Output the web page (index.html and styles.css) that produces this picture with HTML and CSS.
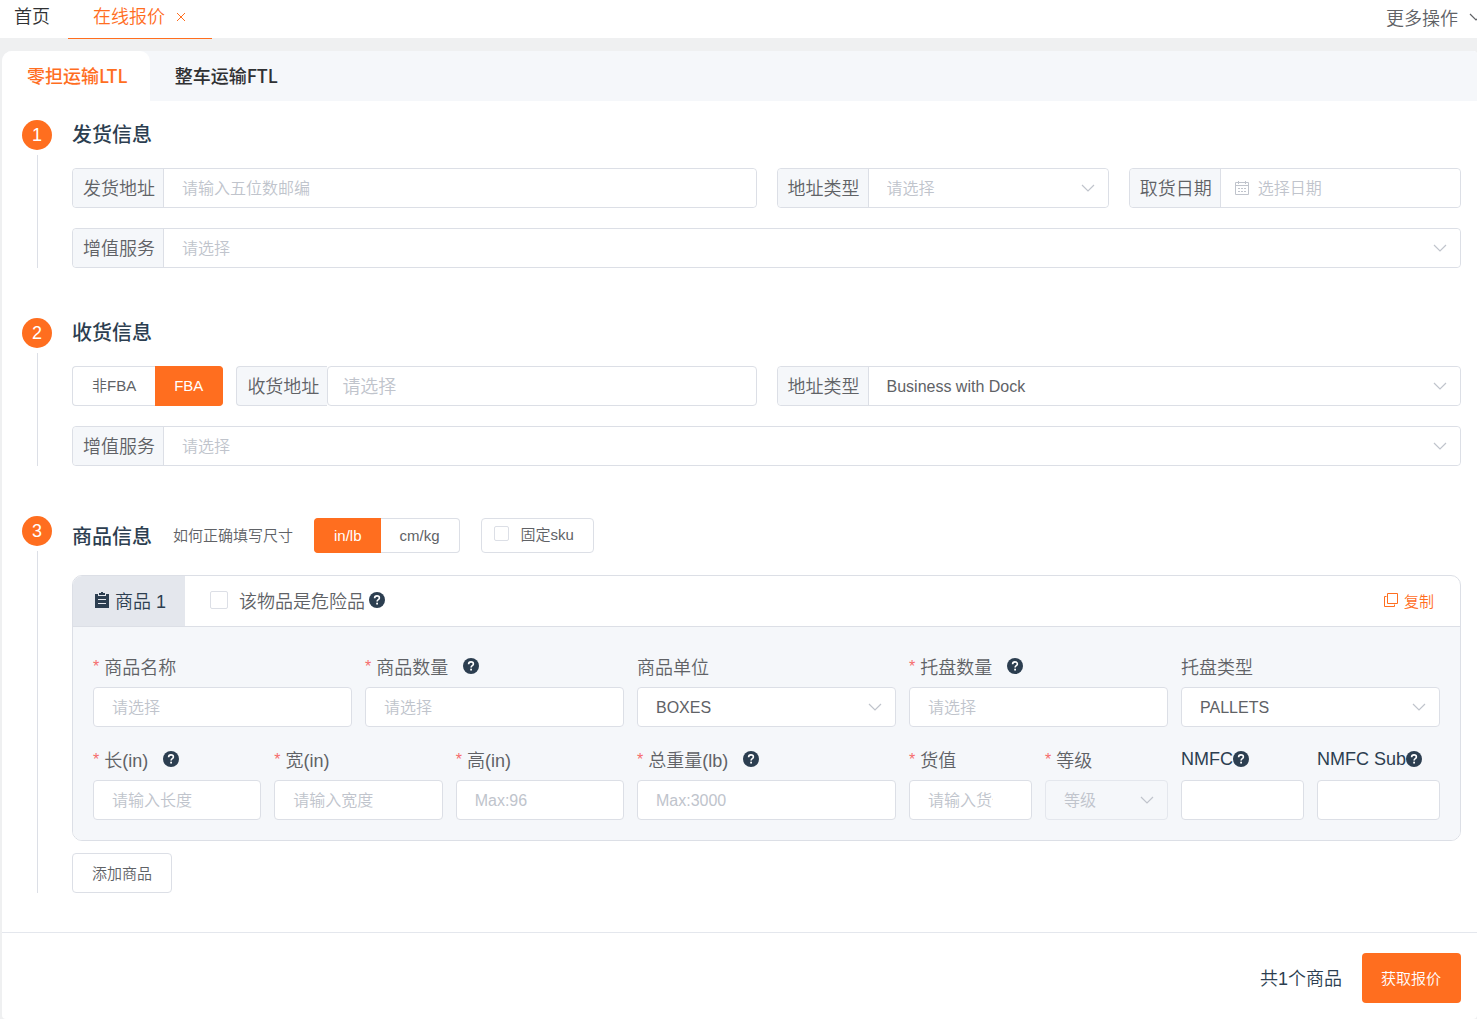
FILE: index.html
```html
<!DOCTYPE html>
<html lang="zh-CN">
<head>
    <meta charset="UTF-8">
    <meta name="viewport" content="width=device-width, initial-scale=1.0">
    <title>在线报价</title>
    <link rel="stylesheet" href="styles.css">
</head>
<body>
    <!-- shared icons -->
    <svg class="sprite" aria-hidden="true">
        <symbol id="icon-arrow" viewBox="0 0 16 16">
            <path d="M2 5l6 6 6-6" fill="none" stroke="currentColor" stroke-width="1.2"/>
        </symbol>
        <symbol id="icon-help" viewBox="0 0 16 16">
            <circle cx="8" cy="8" r="8" fill="#2c3e50"/>
            <path d="M5.6 6.2c0-1.5 1-2.3 2.4-2.3s2.4.8 2.4 2c0 1.7-2.3 1.7-2.3 3.5" fill="none" stroke="#fff" stroke-width="1.6"/>
            <rect x="7.2" y="10.7" width="1.8" height="1.8" fill="#fff"/>
        </symbol>
    </svg>

    <header class="topbar">
        <nav class="topbar-tabs">
            <a href="#" class="top-tab">首页</a>
            <a href="#" class="top-tab active">在线报价
                <svg class="close" viewBox="0 0 10 10"><path d="M1 1l8 8M9 1l-8 8" stroke="currentColor" stroke-width="1"/></svg>
            </a>
        </nav>
        <button type="button" class="more">更多操作 <svg class="icon"><use href="#icon-arrow"/></svg></button>
    </header>

    <main class="page">
        <nav class="mode-tabs">
            <a href="#" class="mode-tab active">零担运输LTL</a>
            <a href="#" class="mode-tab">整车运输FTL</a>
        </nav>

        <form class="quote-form">
            <section class="step">
                <div class="step-side"><span class="step-num">1</span><span class="step-line"></span></div>
                <div class="step-body">
                    <h2>发货信息</h2>
                    <div class="row">
                        <div class="group span-2">
                            <label for="from-zip">发货地址</label>
                            <input type="text" id="from-zip" placeholder="请输入五位数邮编">
                        </div>
                        <div class="group">
                            <label for="from-type">地址类型</label>
                            <div class="select">
                                <select id="from-type" class="empty"><option>请选择</option></select>
                                <svg class="icon"><use href="#icon-arrow"/></svg>
                            </div>
                        </div>
                        <div class="group">
                            <label for="pickup-date">取货日期</label>
                            <div class="date">
                                <svg class="calendar" viewBox="0 0 14 14" fill="none" stroke="currentColor">
                                    <path d="M.5 1.5h13v12H.5zM.5 4.5h13M3.5 0v3M10.5 0v3"/>
                                    <path d="M3 7.5h8M3 10.5h8" stroke-dasharray="2 1"/>
                                </svg>
                                <input type="text" id="pickup-date" placeholder="选择日期">
                            </div>
                        </div>
                        <div class="group span-4">
                            <label for="from-service">增值服务</label>
                            <div class="select">
                                <select id="from-service" class="empty"><option>请选择</option></select>
                                <svg class="icon"><use href="#icon-arrow"/></svg>
                            </div>
                        </div>
                    </div>
                </div>
            </section>

            <section class="step">
                <div class="step-side"><span class="step-num">2</span><span class="step-line"></span></div>
                <div class="step-body">
                    <h2>收货信息</h2>
                    <div class="row">
                        <div class="receiver span-2">
                            <div class="radio-group">
                                <label><input type="radio" name="fba"><span>非FBA</span></label>
                                <label><input type="radio" name="fba" checked><span>FBA</span></label>
                            </div>
                            <div class="group receiver-address">
                                <label for="to-address">收货地址</label>
                                <input type="text" id="to-address" placeholder="请选择">
                            </div>
                        </div>
                        <div class="group span-2">
                            <label for="to-type">地址类型</label>
                            <div class="select">
                                <select id="to-type"><option>Business with Dock</option></select>
                                <svg class="icon"><use href="#icon-arrow"/></svg>
                            </div>
                        </div>
                        <div class="group span-4">
                            <label for="to-service">增值服务</label>
                            <div class="select">
                                <select id="to-service" class="empty"><option>请选择</option></select>
                                <svg class="icon"><use href="#icon-arrow"/></svg>
                            </div>
                        </div>
                    </div>
                </div>
            </section>

            <section class="step">
                <div class="step-side"><span class="step-num">3</span><span class="step-line"></span></div>
                <div class="step-body">
                    <div class="goods-head">
                        <h2>商品信息</h2>
                        <a href="#" class="how-to">如何正确填写尺寸</a>
                        <div class="radio-group small">
                            <label><input type="radio" name="measure" checked><span>in/lb</span></label>
                            <label><input type="radio" name="measure"><span>cm/kg</span></label>
                        </div>
                        <label class="fixed-sku"><input type="checkbox">固定sku</label>
                    </div>

                    <div class="card">
                        <div class="card-head">
                            <div class="card-name">
                                <svg class="clipboard" viewBox="0 0 14 16">
                                    <path d="M0 2h3v2h8V2h3v14H0zM4 1h2V0h2v1h2v2H4z" fill="#2c3e50"/>
                                    <path d="M3 7.5h8M3 11.5h8" stroke="#e4e7ed"/>
                                </svg>
                                商品 1
                            </div>
                            <label class="danger"><input type="checkbox">该物品是危险品</label>
                            <svg class="help"><use href="#icon-help"/></svg>
                            <button type="button" class="copy">
                                <svg viewBox="0 0 14 14" fill="none" stroke="currentColor"><path d="M3.5.5h10v10h-10zM2.5 3.5h-2v10h10v-2"/></svg>
                                复制
                            </button>
                        </div>
                        <div class="card-body">
                            <div class="field">
                                <div class="field-label required"><label for="name">商品名称</label></div>
                                <input type="text" id="name" placeholder="请选择">
                            </div>
                            <div class="field">
                                <div class="field-label required"><label for="count">商品数量</label><svg class="help"><use href="#icon-help"/></svg></div>
                                <input type="text" id="count" placeholder="请选择">
                            </div>
                            <div class="field">
                                <div class="field-label"><label for="unit">商品单位</label></div>
                                <div class="select">
                                    <select id="unit"><option>BOXES</option></select>
                                    <svg class="icon"><use href="#icon-arrow"/></svg>
                                </div>
                            </div>
                            <div class="field">
                                <div class="field-label required"><label for="pallets">托盘数量</label><svg class="help"><use href="#icon-help"/></svg></div>
                                <input type="text" id="pallets" placeholder="请选择">
                            </div>
                            <div class="field">
                                <div class="field-label"><label for="pallet-type">托盘类型</label></div>
                                <div class="select">
                                    <select id="pallet-type"><option>PALLETS</option></select>
                                    <svg class="icon"><use href="#icon-arrow"/></svg>
                                </div>
                            </div>

                            <div class="sizes">
                                <div class="field">
                                    <div class="field-label required"><label for="length">长(in)</label><svg class="help"><use href="#icon-help"/></svg></div>
                                    <input type="text" id="length" placeholder="请输入长度">
                                </div>
                                <div class="field">
                                    <div class="field-label required"><label for="width">宽(in)</label></div>
                                    <input type="text" id="width" placeholder="请输入宽度">
                                </div>
                                <div class="field">
                                    <div class="field-label required"><label for="height">高(in)</label></div>
                                    <input type="text" id="height" placeholder="Max:96">
                                </div>
                            </div>
                            <div class="field">
                                <div class="field-label required"><label for="weight">总重量(lb)</label><svg class="help"><use href="#icon-help"/></svg></div>
                                <input type="text" id="weight" placeholder="Max:3000">
                            </div>
                            <div class="extras">
                                <div class="field">
                                    <div class="field-label required"><label for="value">货值</label></div>
                                    <input type="text" id="value" placeholder="请输入货值">
                                </div>
                                <div class="field">
                                    <div class="field-label required"><label for="class">等级</label></div>
                                    <div class="select">
                                        <select id="class" class="empty" disabled><option>等级</option></select>
                                        <svg class="icon"><use href="#icon-arrow"/></svg>
                                    </div>
                                </div>
                                <div class="field">
                                    <div class="field-label dark"><label for="nmfc">NMFC</label><svg class="help"><use href="#icon-help"/></svg></div>
                                    <input type="text" id="nmfc">
                                </div>
                                <div class="field">
                                    <div class="field-label dark"><label for="nmfc-sub">NMFC Sub</label><svg class="help"><use href="#icon-help"/></svg></div>
                                    <input type="text" id="nmfc-sub">
                                </div>
                            </div>
                        </div>
                    </div>

                    <button type="button" class="add">添加商品</button>
                </div>
            </section>
        </form>

        <footer class="bottom">
            <span>共1个商品</span>
            <button type="button" class="submit">获取报价</button>
        </footer>
    </main>
</body>
</html>
```

FILE: styles.css
```css
* {
    box-sizing: border-box;
}

body {
    margin: 0;
    background-color: #eff0f1;
    color: #2c3e50;
    font-family: "Liberation Sans", "Noto Sans CJK SC", sans-serif;
    font-size: 18px;
    font-weight: 350;
}

a {
    color: inherit;
    text-decoration: none;
}

button,
input,
select {
    margin: 0;
    font-family: inherit;
    font-weight: inherit;
}

button {
    cursor: pointer;
}

h2 {
    margin: 0;
    font-size: 20px;
    font-weight: 500;
    line-height: 28px;
    font-family: "Noto Sans CJK SC", sans-serif;
}

.sprite {
    display: none;
}

.icon,
.help {
    width: 16px;
    height: 16px;
    flex: none;
}

/* top bar */
.topbar {
    display: flex;
    justify-content: space-between;
    height: 38px;
    background-color: #fff;
    overflow-x: clip;
}

.topbar-tabs {
    display: flex;
    gap: 18px;
    padding-left: 14px;
}

.top-tab {
    height: 38px;
    line-height: 34px;
    color: #303133;
}

.top-tab.active {
    display: flex;
    align-items: center;
    gap: 11px;
    height: 39px;
    padding: 0 26px 4px 25px;
    border-bottom: 1px solid #ff6e1f;
    color: #ff6e1f;
}

.close {
    width: 10px;
    height: 10px;
}

.more {
    display: flex;
    align-items: center;
    gap: 10px;
    margin-right: -7px;
    padding: 0 0 4px;
    border: none;
    background: none;
    color: #606266;
    font-size: 18px;
}

/* page */
.page {
    margin: 13px 0 0 2px;
    background-color: #fff;
    border-radius: 10px 4px 4px 4px;
}

.mode-tabs {
    display: flex;
    height: 50px;
    background-color: #f5f7fa;
    border-radius: 10px 4px 0 0;
}

.mode-tab {
    padding: 0 22px 0 25px;
    border-radius: 10px 10px 0 0;
    color: #303133;
    font-family: "Noto Sans CJK SC", sans-serif;
    font-weight: 500;
    line-height: 48px;
}

.mode-tab.active {
    background-color: #fff;
    color: #ff6e1f;
}

.quote-form {
    display: flex;
    flex-direction: column;
    gap: 50px;
    padding: 19px 16px 39px 20px;
}

.step {
    display: flex;
    gap: 20px;
}

.step-side {
    display: flex;
    flex-direction: column;
    align-items: center;
    gap: 5px;
    width: 30px;
}

.step-num {
    width: 30px;
    height: 30px;
    border-radius: 50%;
    background-color: #ff6e1f;
    color: #fff;
    line-height: 30px;
    text-align: center;
}

.step-line {
    flex: 1;
    width: 1px;
    background-color: #dcdfe6;
}

.step-body {
    flex: 1;
    min-width: 0;
}

.row {
    display: grid;
    grid-template-columns: repeat(4, minmax(0, 1fr));
    gap: 20px;
    margin-top: 20px;
}

.span-2 {
    grid-column: span 2;
}

.span-4 {
    grid-column: span 4;
}

/* inputs */
input[type="text"],
select {
    width: 100%;
    height: 40px;
    padding: 0 18px;
    border: 1px solid #dcdfe6;
    border-radius: 4px;
    background-color: #fff;
    color: #606266;
    font-size: 16px;
}

input[type="text"] {
    padding-top: 2px;
}

input::placeholder {
    color: #c0c4cc;
}

select {
    appearance: none;
    opacity: 1;
}

select.empty {
    color: #c0c4cc;
}

select:disabled {
    border-color: #e4e7ed;
    background-color: #f5f7fa;
}

.select {
    position: relative;
    flex: 1;
}

.select .icon {
    position: absolute;
    top: 12px;
    right: 13px;
    color: #c0c4cc;
    pointer-events: none;
}

.group {
    display: flex;
    height: 40px;
    border: 1px solid #dcdfe6;
    border-radius: 4px;
}

.group > label {
    flex: none;
    width: 91px;
    padding-left: 10px;
    border-right: 1px solid #dcdfe6;
    border-radius: 4px 0 0 4px;
    background-color: #f5f7fa;
    color: #606266;
    line-height: 40px;
}

.group input[type="text"],
.group select {
    height: 38px;
    border: none;
}

.group .select .icon {
    top: 11px;
    right: 12px;
}

.date {
    display: flex;
    flex: 1;
    align-items: center;
    gap: 9px;
    padding-left: 14px;
}

.date input[type="text"] {
    padding: 2px 0 0;
}

.calendar {
    width: 14px;
    height: 14px;
    flex: none;
    color: #c0c4cc;
}

.receiver {
    display: flex;
    gap: 13px;
}

.receiver .group {
    flex: 1;
    border: none;
}

.receiver .group > label {
    border: 1px solid #dcdfe6;
    border-right: none;
}

.receiver .group input[type="text"] {
    height: 40px;
    padding: 2px 14px 0;
    border: 1px solid #dcdfe6;
    font-size: 18px;
}

/* radio buttons */
.radio-group {
    display: flex;
}

.radio-group label {
    position: relative;
}

.radio-group input {
    position: absolute;
    opacity: 0;
}

.radio-group span {
    display: block;
    height: 40px;
    padding: 0 19px;
    border: 1px solid #dcdfe6;
    color: #606266;
    font-size: 15px;
    line-height: 38px;
}

.radio-group label:first-child span {
    border-right: none;
    border-radius: 4px 0 0 4px;
}

.radio-group label:last-child span {
    border-left: none;
    border-radius: 0 4px 4px 0;
}

.radio-group input:checked + span {
    border-color: #ff6e1f;
    background-color: #ff6e1f;
    color: #fff;
}

.radio-group.small span {
    height: 35px;
    line-height: 34px;
}

input[type="checkbox"] {
    appearance: none;
    flex: none;
    width: 18px;
    height: 18px;
    border: 1px solid #dcdfe6;
    border-radius: 2px;
    background-color: #fff;
}

/* goods */
.goods-head {
    display: flex;
    align-items: center;
    gap: 21px;
    padding-top: 2px;
}

.how-to {
    padding-bottom: 2px;
    color: #606266;
    font-size: 15px;
}

.fixed-sku {
    display: flex;
    align-items: center;
    gap: 12px;
    height: 35px;
    padding: 0 19px 4px 12px;
    border: 1px solid #dcdfe6;
    border-radius: 4px;
    color: #606266;
    font-size: 15px;
}

.fixed-sku input[type="checkbox"] {
    width: 15px;
    height: 15px;
}

.card {
    margin-top: 22px;
    border: 1px solid #dcdfe6;
    border-radius: 10px;
    overflow: hidden;
}

.card-head {
    display: flex;
    align-items: center;
    height: 51px;
    border-bottom: 1px solid #dcdfe6;
}

.card-name {
    display: flex;
    align-items: center;
    gap: 6px;
    height: 50px;
    padding: 0 19px 2px 22px;
    background-color: #e4e7ed;
}

.clipboard {
    width: 14px;
    height: 16px;
}

.danger {
    display: flex;
    align-items: center;
    gap: 11px;
    margin: 0 4px 2px 25px;
    color: #606266;
}

.card-head > .help {
    margin-bottom: 2px;
}

.copy {
    display: flex;
    align-items: center;
    gap: 6px;
    margin-left: auto;
    padding: 0 26px 2px 0;
    border: none;
    background: none;
    color: #ff6e1f;
    font-size: 15px;
}

.copy svg {
    width: 14px;
    height: 14px;
}

.card-body {
    display: grid;
    grid-template-columns: repeat(5, minmax(0, 1fr));
    gap: 13px;
    padding: 20px;
    background-color: #f5f7fa;
}

.sizes,
.extras {
    display: grid;
    grid-column: span 2;
    gap: 13px;
}

.sizes {
    grid-template-columns: repeat(3, minmax(0, 1fr));
}

.extras {
    grid-template-columns: repeat(4, minmax(0, 1fr));
}

.extras input[type="text"] {
    padding-right: 38px;
}

.field-label {
    display: flex;
    align-items: center;
    gap: 15px;
    height: 40px;
    padding-bottom: 2px;
    color: #606266;
    white-space: nowrap;
}

.field-label.dark {
    gap: 0;
    color: #2c3e50;
}

.required label::before {
    content: "*";
    margin-right: 5px;
    color: #f56c6c;
    font-size: 16px;
    vertical-align: 2px;
}

.add {
    display: block;
    height: 40px;
    margin-top: 12px;
    padding: 0 19px 2px;
    border: 1px solid #dcdfe6;
    border-radius: 4px;
    background-color: #fff;
    color: #606266;
    font-size: 15px;
}

/* footer */
.bottom {
    display: flex;
    align-items: center;
    justify-content: flex-end;
    gap: 20px;
    padding: 20px 16px 16px;
    border-top: 1px solid #e4e7ed;
}

.bottom span {
    padding-bottom: 2px;
}

.submit {
    height: 50px;
    padding: 0 20px 2px 19px;
    border: none;
    border-radius: 4px;
    background-color: #ff6e1f;
    color: #fff;
    font-size: 15px;
}
```
